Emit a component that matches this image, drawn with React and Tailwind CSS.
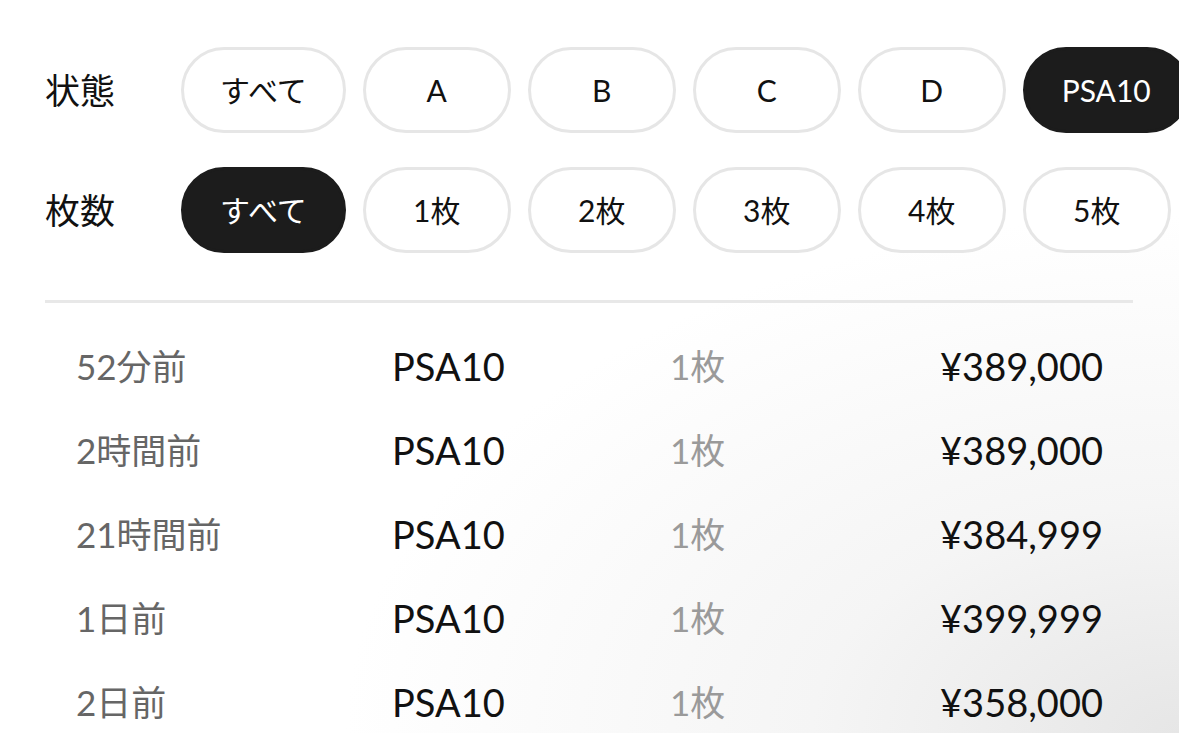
import React from "react";

const FONT = { fontFamily: 'Lato, "Noto Sans CJK JP", sans-serif' };

function Pill({ label, active }) {
  return (
    <div
      className={
        "shrink-0 h-[86px] min-w-[148px] px-[36px] rounded-full border-[3px] flex items-center justify-center text-[30px] leading-none " +
        (active
          ? "bg-[#1c1c1c] border-[#1c1c1c] text-white"
          : "bg-white border-[#e6e6e6] text-[#111]")
      }
    >
      {label}
    </div>
  );
}

function FilterRow({ title, items, activeIndex }) {
  return (
    <div className="flex items-center">
      <div className="w-[136px] shrink-0 text-[35px] leading-none text-[#111]">{title}</div>
      <div className="flex gap-[17px] flex-nowrap">
        {items.map((it, i) => (
          <Pill key={it} label={it} active={i === activeIndex} />
        ))}
      </div>
    </div>
  );
}

const rows = [
  ["52分前", "PSA10", "1枚", "¥389,000"],
  ["2時間前", "PSA10", "1枚", "¥389,000"],
  ["21時間前", "PSA10", "1枚", "¥384,999"],
  ["1日前", "PSA10", "1枚", "¥399,999"],
  ["2日前", "PSA10", "1枚", "¥358,000"],
];

export default function App() {
  return (
    <div
      className="w-[1179px] h-[733px] overflow-hidden bg-white bg-[radial-gradient(ellipse_at_100%_100%,#e6e6e6_0%,#f5f5f5_22%,#ffffff_50%)]"
      style={FONT}
    >
      <div className="pl-[45px] pt-[47px] flex flex-col gap-[34px]">
        <FilterRow title="状態" items={["すべて", "A", "B", "C", "D", "PSA10"]} activeIndex={5} />
        <FilterRow title="枚数" items={["すべて", "1枚", "2枚", "3枚", "4枚", "5枚"]} activeIndex={0} />
      </div>
      <div className="ml-[45px] w-[1088px] mt-[47px] h-[3px] bg-[#e8e8e8]" />
      <div className="ml-[76px] w-[1027px] mt-[21px] flex flex-col">
        {rows.map((r, i) => (
          <div key={i} className="grid grid-cols-[316px_278px_1fr_auto] items-center h-[84px] leading-none">
            <div className="text-[35px] text-[#666]">{r[0]}</div>
            <div className="text-[38px] text-[#111]">{r[1]}</div>
            <div className="text-[35px] text-[#9a9a9a]">{r[2]}</div>
            <div className="text-[38px] text-right text-[#111]">{r[3]}</div>
          </div>
        ))}
      </div>
    </div>
  );
}
